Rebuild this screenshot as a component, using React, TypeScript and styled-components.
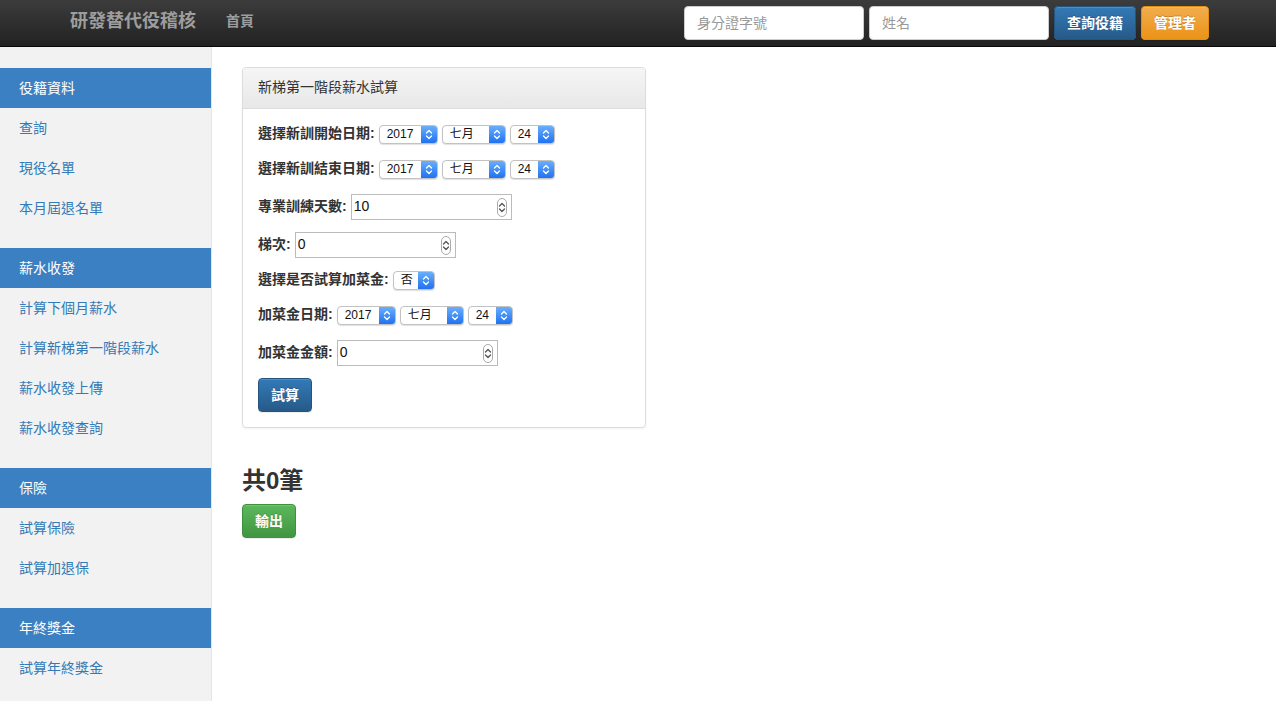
import styled, { createGlobalStyle } from "styled-components";

const GlobalStyle = createGlobalStyle`
   html, body {
      margin: 0;
      padding: 0;
      background: #fff;
   }
   body {
      font-family: "Liberation Sans", "Noto Sans CJK TC", sans-serif;
      font-size: 14px;
      line-height: 1.42857;
      color: #333;
   }
   * {
      box-sizing: border-box;
   }
`;

const menu = [
   { title: "役籍資料", items: ["查詢", "現役名單", "本月屆退名單"] },
   {
      title: "薪水收發",
      items: ["計算下個月薪水", "計算新梯第一階段薪水", "薪水收發上傳", "薪水收發查詢"],
   },
   { title: "保險", items: ["試算保險", "試算加退保"] },
   { title: "年終獎金", items: ["試算年終獎金"] },
];

type DateSel = { year: string; month: string; day: string };
const today: DateSel = { year: "2017", month: "七月", day: "24" };

function Chevrons({ light }: { light?: boolean }) {
   const c = light ? "#fff" : "#555";
   return (
      <svg width="8" height="13" viewBox="0 0 8 13">
         <path d="M1.5 5 L4 2.5 L6.5 5" fill="none" stroke={c} strokeWidth="1.3" strokeLinecap="round" strokeLinejoin="round" />
         <path d="M1.5 8 L4 10.5 L6.5 8" fill="none" stroke={c} strokeWidth="1.3" strokeLinecap="round" strokeLinejoin="round" />
      </svg>
   );
}

function PopUp({ value, width }: { value: string; width: number }) {
   return (
      <PopUpBox $width={width}>
         <span className="value">{value}</span>
         <span className="arrow">
            <Chevrons light />
         </span>
      </PopUpBox>
   );
}

function DatePicker({ date }: { date: DateSel }) {
   return (
      <>
         <PopUp value={date.year} width={59} />
         <PopUp value={date.month} width={64} />
         <PopUp value={date.day} width={45} />
      </>
   );
}

function NumberField({ value }: { value: string }) {
   return (
      <NumberBox>
         <span>{value}</span>
         <span className="spin">
            <Chevrons />
         </span>
      </NumberBox>
   );
}

function App() {
   return (
      <>
         <GlobalStyle />
         <Navbar>
            <Brand>研發替代役稽核</Brand>
            <NavLink>首頁</NavLink>
            <NavForm>
               <NavInput placeholder="身分證字號" />
               <NavInput placeholder="姓名" />
               <Button $variant="primary">查詢役籍</Button>
               <Button $variant="warning">管理者</Button>
            </NavForm>
         </Navbar>
         <Layout>
            <Sidebar>
               {menu.map((group) => (
                  <MenuGroup key={group.title}>
                     <MenuHeader>{group.title}</MenuHeader>
                     {group.items.map((item) => (
                        <MenuItem key={item}>{item}</MenuItem>
                     ))}
                  </MenuGroup>
               ))}
            </Sidebar>
            <Content>
               <Panel>
                  <PanelHeading>新梯第一階段薪水試算</PanelHeading>
                  <PanelBody>
                     <FormRow>
                        <Label>選擇新訓開始日期:</Label>
                        <DatePicker date={today} />
                     </FormRow>
                     <FormRow>
                        <Label>選擇新訓結束日期:</Label>
                        <DatePicker date={today} />
                     </FormRow>
                     <FormRow $input>
                        <Label>專業訓練天數:</Label>
                        <NumberField value="10" />
                     </FormRow>
                     <FormRow $input>
                        <Label>梯次:</Label>
                        <NumberField value="0" />
                     </FormRow>
                     <FormRow>
                        <Label>選擇是否試算加菜金:</Label>
                        <PopUp value="否" width={42} />
                     </FormRow>
                     <FormRow>
                        <Label>加菜金日期:</Label>
                        <DatePicker date={today} />
                     </FormRow>
                     <FormRow $input>
                        <Label>加菜金金額:</Label>
                        <NumberField value="0" />
                     </FormRow>
                     <Button $variant="primary">試算</Button>
                  </PanelBody>
               </Panel>
               <Total>共0筆</Total>
               <Button $variant="success">輸出</Button>
            </Content>
         </Layout>
      </>
   );
}

export default App;

const Navbar = styled.nav`
   display: flex;
   align-items: center;
   height: 47px;
   padding-left: 70px;
   background-image: linear-gradient(to bottom, #3c3c3c 0%, #222 100%);
   border-bottom: 1px solid #080808;
`;

const Brand = styled.div`
   font-size: 18px;
   color: #9d9d9d;
   font-weight: bold;
   margin-right: 30px;
   margin-top: -2px;
`;

const NavLink = styled.div`
   font-size: 14px;
   color: #9d9d9d;
   font-weight: bold;
   margin-top: -2px;
`;

const NavForm = styled.div`
   display: flex;
   align-items: center;
   gap: 5px;
   margin-left: auto;
   margin-right: 67px;
   margin-top: -1px;
`;

const NavInput = styled.input`
   width: 180px;
   height: 34px;
   padding: 6px 12px;
   font-family: inherit;
   font-size: 14px;
   color: #555;
   background: #fff;
   border: 1px solid #ccc;
   border-radius: 4px;
   outline: none;
   &::placeholder {
      color: #999;
   }
`;

const Button = styled.button<{ $variant: "primary" | "warning" | "success" }>`
   height: 34px;
   padding: 6px 12px;
   font-family: inherit;
   font-size: 14px;
   font-weight: bold;
   line-height: 20px;
   color: #fff;
   border-radius: 4px;
   cursor: pointer;
   text-shadow: 0 -1px 0 rgba(0, 0, 0, 0.2);
   box-shadow: inset 0 1px 0 rgba(255, 255, 255, 0.15), 0 1px 1px rgba(0, 0, 0, 0.075);
   background-image: ${(p) =>
      p.$variant === "primary"
         ? "linear-gradient(to bottom, #337ab7 0%, #265a88 100%)"
         : p.$variant === "warning"
         ? "linear-gradient(to bottom, #f0ad4e 0%, #eb9316 100%)"
         : "linear-gradient(to bottom, #5cb85c 0%, #419641 100%)"};
   border: 1px solid
      ${(p) =>
         p.$variant === "primary" ? "#245580" : p.$variant === "warning" ? "#e38d13" : "#3e8f3e"};
`;

const Layout = styled.div`
   display: flex;
   min-height: calc(100vh - 47px);
`;

const Sidebar = styled.aside`
   width: 212px;
   flex-shrink: 0;
   padding-top: 21px;
   background: #f2f2f2;
   border-right: 1px solid #e6e6e6;
`;

const MenuGroup = styled.div`
   margin-bottom: 20px;
`;

const MenuHeader = styled.div`
   height: 40px;
   padding-left: 19px;
   line-height: 40px;
   font-size: 14px;
   color: #fff;
   background: #3a80c3;
`;

const MenuItem = styled.div`
   height: 40px;
   padding-left: 19px;
   line-height: 40px;
   font-size: 14px;
   color: #337ab7;
`;

const Content = styled.main`
   flex: 1;
   padding: 20px 30px;
`;

const Panel = styled.section`
   width: 404px;
   margin-bottom: 20px;
   background: #fff;
   border: 1px solid #ddd;
   border-radius: 4px;
   box-shadow: 0 1px 2px rgba(0, 0, 0, 0.05);
`;

const PanelHeading = styled.div`
   height: 41px;
   padding: 10px 15px;
   font-size: 14px;
   color: #333;
   background-image: linear-gradient(to bottom, #f5f5f5 0%, #e8e8e8 100%);
   border-bottom: 1px solid #ddd;
   border-radius: 3px 3px 0 0;
`;

const PanelBody = styled.div`
   padding: 15px;
`;

const FormRow = styled.div<{ $input?: boolean }>`
   display: flex;
   align-items: center;
   gap: 4px;
   min-height: 20px;
   margin-bottom: ${(p) => (p.$input ? 12 : 15)}px;
`;

const Label = styled.label`
   font-size: 14px;
   font-weight: bold;
   color: #333;
`;

const PopUpBox = styled.div<{ $width: number }>`
   display: flex;
   width: ${(p) => p.$width}px;
   height: 19px;
   font-size: 12px;
   color: #111;
   background: #fff;
   border: 1px solid #c2c2c2;
   border-radius: 4px;
   box-shadow: 0 1px 1px rgba(0, 0, 0, 0.12);
   overflow: hidden;
   .value {
      flex: 1;
      padding-left: 7px;
      line-height: 17px;
   }
   .arrow {
      display: flex;
      align-items: center;
      justify-content: center;
      width: 16px;
      background-image: linear-gradient(to bottom, #6aaefc 0%, #1f72f2 100%);
   }
`;

const NumberBox = styled.div`
   display: flex;
   align-items: center;
   justify-content: space-between;
   width: 161px;
   height: 26px;
   padding: 0 4px 0 2px;
   font-size: 14px;
   color: #111;
   background: #fff;
   border: 1px solid #bbb;
   .spin {
      display: flex;
      align-items: center;
      justify-content: center;
      width: 10px;
      height: 19px;
      border: 1px solid #aaa;
      border-radius: 5px;
   }
`;

const Total = styled.h3`
   margin: 40px 0 10px;
   font-size: 24px;
   font-weight: bold;
   line-height: 1.1;
   color: #333;
`;
